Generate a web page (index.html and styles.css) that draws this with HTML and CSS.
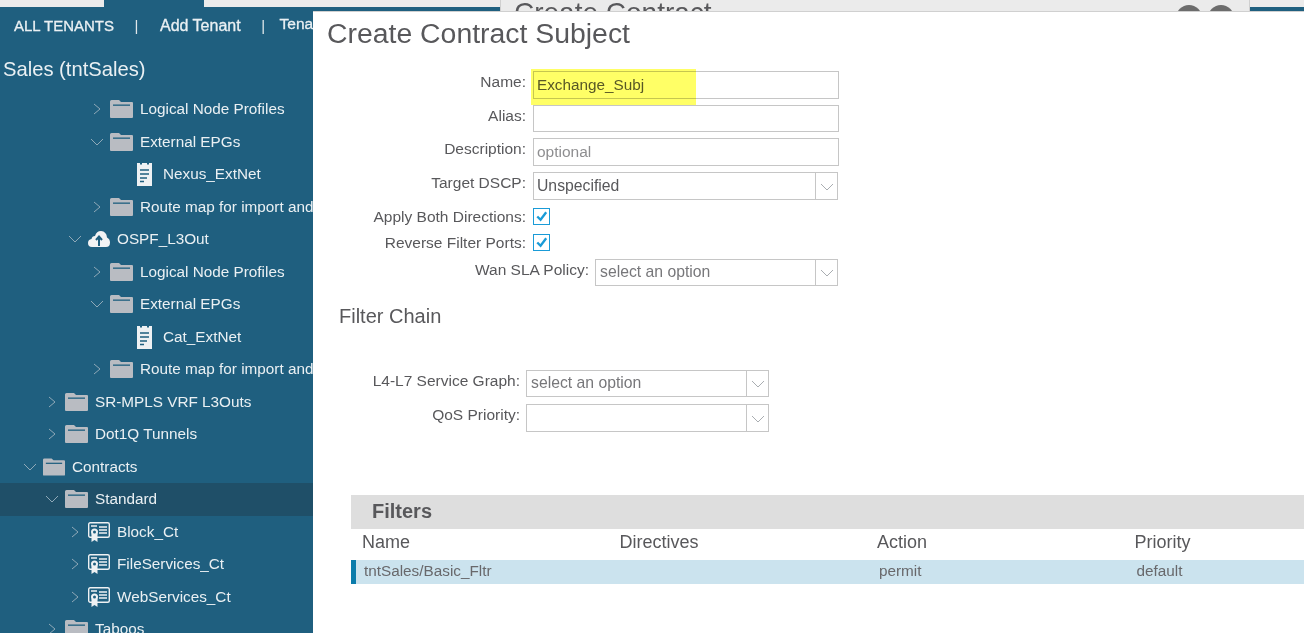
FILE: index.html
```html
<!DOCTYPE html>
<html lang="en">
<head>
    <meta charset="UTF-8">
    <meta name="viewport" content="width=device-width, initial-scale=1.0">
    <title>Create Contract Subject</title>
    <link rel="stylesheet" href="styles.css">
</head>
<body>

    <!-- icon sheet -->
    <svg class="icon-sheet" width="0" height="0">
        <symbol id="folder" viewBox="0 0 23 18">
            <path d="M0 1.500Q0 0 1.500 0H9L11 2H22Q23 2 23 3V17Q23 18 22 18H1Q0 18 0 17Z" fill="#b9bcc2"/>
            <rect x="3" y="4.500" width="17" height="1.300" fill="#1f5f7f"/>
        </symbol>
        <symbol id="note" viewBox="0 0 15 23">
            <path d="M0 0H3V1.500H5V0H10V1.500H12V0H15V23H0Z" fill="#eef1f3"/>
            <path d="M3 7H12M3 11H12M3 15H10M3 18.500H7" stroke="#1f5f7f" stroke-width="1.600" fill="none"/>
        </symbol>
        <symbol id="cloud" viewBox="0 0 22 16">
            <path d="M4 16Q0 16 0 12Q0 8.500 3.500 8Q4 5 7 5Q8.500 0 13 0Q18.500 0.500 19 6.500Q22 8 22 11.500Q22 16 18 16Z" fill="#f2f3f4"/>
            <path d="M11 15V6M8 9L11 5.500L14 9" stroke="#1f5f7f" stroke-width="2" fill="none"/>
        </symbol>
        <symbol id="cert" viewBox="0 0 22 20">
            <rect x="0.700" y="0.700" width="20.600" height="14.600" rx="1.500" fill="#1f5f7f" stroke="#eef1f3" stroke-width="1.400"/>
            <path d="M11 5H19M11 8H19M11 11H19M3 4H9" stroke="#eef1f3" stroke-width="1.300" fill="none"/>
            <path d="M3.500 12V20L6.500 18L9.500 20V12Z" fill="#eef1f3"/>
            <circle cx="6.500" cy="10" r="3.500" fill="#eef1f3"/>
            <circle cx="6.500" cy="10" r="1.500" fill="#1f5f7f"/>
        </symbol>
        <symbol id="right" viewBox="0 0 8 12">
            <path d="M1 1L7 6L1 11" stroke="#8fa9b8" stroke-width="1" fill="none"/>
        </symbol>
        <symbol id="down" viewBox="0 0 14 8">
            <path d="M1 1L7 7L13 1" stroke="#8fa9b8" stroke-width="1" fill="none"/>
        </symbol>
        <symbol id="caret" viewBox="0 0 14 8">
            <path d="M1 1L7 7L13 1" stroke="#a9adb1" stroke-width="1" fill="none"/>
        </symbol>
    </svg>

    <div class="top-strip">
        <div class="strip-gray strip-left"></div>
        <div class="strip-gray strip-right"></div>
    </div>

    <!-- dialog behind -->
    <div class="back-dialog">
        <span class="back-title">Create Contract</span>
        <span class="back-btn"></span>
        <span class="back-btn"></span>
    </div>

    <!-- left tree -->
    <div class="sidebar">
        <div class="tenant-nav">
            <a class="nav-item">ALL TENANTS</a>
            <span class="nav-sep">|</span>
            <a class="nav-item nav-wide">Add Tenant</a>
            <span class="nav-sep">|</span>
            <a class="nav-item nav-cut">Tenant Search</a>
        </div>
        <div class="tenant-name">Sales (tntSales)</div>
        <ul class="tree">
            <li class="node lvl3"><svg class="chev"><use href="#right"/></svg><svg class="ico folder"><use href="#folder"/></svg><span>Logical Node Profiles</span></li>
            <li class="node lvl3 open"><svg class="chev"><use href="#down"/></svg><svg class="ico folder"><use href="#folder"/></svg><span>External EPGs</span></li>
            <li class="node lvl4"><svg class="ico note"><use href="#note"/></svg><span>Nexus_ExtNet</span></li>
            <li class="node lvl3"><svg class="chev"><use href="#right"/></svg><svg class="ico folder"><use href="#folder"/></svg><span>Route map for import and export</span></li>
            <li class="node lvl2 open"><svg class="chev"><use href="#down"/></svg><svg class="ico cloud"><use href="#cloud"/></svg><span>OSPF_L3Out</span></li>
            <li class="node lvl3"><svg class="chev"><use href="#right"/></svg><svg class="ico folder"><use href="#folder"/></svg><span>Logical Node Profiles</span></li>
            <li class="node lvl3 open"><svg class="chev"><use href="#down"/></svg><svg class="ico folder"><use href="#folder"/></svg><span>External EPGs</span></li>
            <li class="node lvl4"><svg class="ico note"><use href="#note"/></svg><span>Cat_ExtNet</span></li>
            <li class="node lvl3"><svg class="chev"><use href="#right"/></svg><svg class="ico folder"><use href="#folder"/></svg><span>Route map for import and export</span></li>
            <li class="node lvl1"><svg class="chev"><use href="#right"/></svg><svg class="ico folder"><use href="#folder"/></svg><span>SR-MPLS VRF L3Outs</span></li>
            <li class="node lvl1"><svg class="chev"><use href="#right"/></svg><svg class="ico folder"><use href="#folder"/></svg><span>Dot1Q Tunnels</span></li>
            <li class="node lvl0 open"><svg class="chev"><use href="#down"/></svg><svg class="ico folder"><use href="#folder"/></svg><span>Contracts</span></li>
            <li class="node lvl1 open selected"><svg class="chev"><use href="#down"/></svg><svg class="ico folder"><use href="#folder"/></svg><span>Standard</span></li>
            <li class="node lvl2"><svg class="chev"><use href="#right"/></svg><svg class="ico cert"><use href="#cert"/></svg><span>Block_Ct</span></li>
            <li class="node lvl2"><svg class="chev"><use href="#right"/></svg><svg class="ico cert"><use href="#cert"/></svg><span>FileServices_Ct</span></li>
            <li class="node lvl2"><svg class="chev"><use href="#right"/></svg><svg class="ico cert"><use href="#cert"/></svg><span>WebServices_Ct</span></li>
            <li class="node lvl1"><svg class="chev"><use href="#right"/></svg><svg class="ico folder"><use href="#folder"/></svg><span>Taboos</span></li>
        </ul>
    </div>

    <!-- front dialog -->
    <div class="dialog">
        <h1 class="dialog-title">Create Contract Subject</h1>

        <div class="form">
            <div class="field">
                <label>Name:</label>
                <div class="input input-name">Exchange_Subj</div>
            </div>
            <div class="field">
                <label>Alias:</label>
                <div class="input"></div>
            </div>
            <div class="field">
                <label>Description:</label>
                <div class="input placeholder">optional</div>
            </div>
            <div class="field field-select">
                <label>Target DSCP:</label>
                <div class="select"><span class="select-text">Unspecified</span><span class="select-btn"><svg class="caret"><use href="#caret"/></svg></span></div>
            </div>
            <div class="field field-check">
                <label>Apply Both Directions:</label>
                <span class="check"><svg viewBox="0 0 16 16"><path d="M3.500 8L7 11.500L13 3.500" stroke="#1a9bd7" stroke-width="2.500" fill="none"/></svg></span>
            </div>
            <div class="field field-check">
                <label>Reverse Filter Ports:</label>
                <span class="check"><svg viewBox="0 0 16 16"><path d="M3.500 8L7 11.500L13 3.500" stroke="#1a9bd7" stroke-width="2.500" fill="none"/></svg></span>
            </div>
            <div class="field field-wan">
                <label>Wan SLA Policy:</label>
                <div class="select"><span class="select-text placeholder-dark">select an option</span><span class="select-btn"><svg class="caret"><use href="#caret"/></svg></span></div>
            </div>
        </div>

        <h2 class="section-title">Filter Chain</h2>

        <div class="form form-chain">
            <div class="field">
                <label>L4-L7 Service Graph:</label>
                <div class="select"><span class="select-text placeholder-dark">select an option</span><span class="select-btn"><svg class="caret"><use href="#caret"/></svg></span></div>
            </div>
            <div class="field">
                <label>QoS Priority:</label>
                <div class="select"><span class="select-text"></span><span class="select-btn"><svg class="caret"><use href="#caret"/></svg></span></div>
            </div>
        </div>

        <div class="filters">
            <div class="filters-head">Filters</div>
            <div class="filters-cols">
                <span>Name</span>
                <span>Directives</span>
                <span>Action</span>
                <span>Priority</span>
            </div>
            <div class="filters-row">
                <span>tntSales/Basic_Fltr</span>
                <span></span>
                <span>permit</span>
                <span>default</span>
            </div>
        </div>

        <!-- marker stroke over the name field -->
        <div class="marker"></div>
    </div>

</body>
</html>
```

FILE: styles.css
```css
/* page */
html, body {
    margin: 0;
    padding: 0;
}

body {
    position: relative;
    width: 1304px;
    height: 633px;
    overflow: hidden;
    background-color: #1f5f7f;
    font-family: "Liberation Sans", Arial, sans-serif;
    font-size: 15.300px;
}

.icon-sheet {
    display: none;
}

/* strip along the top */
.top-strip {
    display: flex;
    height: 7px;
}

.strip-gray {
    background-color: #ebebeb;
}

.strip-left {
    width: 104px;
}

.strip-right {
    flex: 1;
    margin-left: 100px;
}

/* dialog behind the front one */
.back-dialog {
    position: absolute;
    left: 500px;
    top: 0;
    width: 750px;
    height: 12px;
    overflow: hidden;
    background-color: #ebebeb;
    border-left: 1px solid #cfcfcf;
    border-right: 1px solid #cfcfcf;
    box-sizing: border-box;
    display: flex;
}

.back-title {
    margin: -3px 0 0 13px;
    font-size: 28px;
    line-height: 32px;
    color: #58585b;
    flex: 1;
}

.back-btn {
    width: 26px;
    height: 26px;
    margin: 5px 6px 0 0;
    border-radius: 50%;
    background-color: #6c6c6c;
}

.back-btn:last-child {
    margin-right: 15px;
}

/* left tree */
.sidebar {
    width: 313px;
    height: 626px;
    overflow: hidden;
    color: #eaf0f3;
}

.tenant-nav {
    display: flex;
    align-items: baseline;
    height: 27px;
    padding: 10px 0 1px 14px;
    font-size: 15px;
    line-height: 17px;
    white-space: nowrap;
    -webkit-text-stroke: 0.300px #eaf0f3;
}

.nav-sep {
    margin: 0 20.500px;
    color: #dfe7ea;
    -webkit-text-stroke: 0;
}

.nav-wide {
    margin-left: 1px;
    font-size: 16px;
}

.nav-cut {
    position: relative;
    top: -2px;
    margin-left: -6px;
    font-size: 15.500px;
}

.tenant-name {
    padding: 12px 0 0 3px;
    height: 36px;
    font-size: 20.200px;
    line-height: 24px;
}

.tree {
    list-style: none;
    margin: 0;
    padding: 0;
}

/* rows alternate so the pitch averages 32.5 */
.node {
    position: relative;
    display: flex;
    align-items: center;
    box-sizing: border-box;
    height: 33px;
    padding-bottom: 1px;
    white-space: nowrap;
}

.node:nth-child(even) {
    height: 32px;
    padding-bottom: 0;
}

.selected {
    background-color: #1f4f68;
}

.lvl0 { padding-left: 43px; }
.lvl1 { padding-left: 65px; }
.lvl2 { padding-left: 88px; }
.lvl3 { padding-left: 110px; }
.lvl4 { padding-left: 137px; }

.chev {
    position: absolute;
    width: 8px;
    height: 12px;
    margin-left: -17px;
}

.open .chev {
    width: 14px;
    height: 8px;
    margin-left: -20px;
}

.ico {
    flex: none;
}

.folder {
    width: 23px;
    height: 18px;
    margin-right: 7px;
}

.lvl0 .folder {
    width: 22px;
}

.note {
    width: 15px;
    height: 23px;
    margin-right: 11px;
}

.cloud {
    width: 22px;
    height: 16px;
    margin-right: 7px;
}

.cert {
    width: 22px;
    height: 20px;
    margin-right: 7px;
}

/* front dialog */
.dialog {
    position: absolute;
    left: 313px;
    top: 11px;
    right: 0;
    bottom: 0;
    background-color: #fff;
    border-top: 1px solid #d0d0d0;
    color: #58585b;
}

.dialog-title {
    margin: 0;
    padding: 5px 0 0 14px;
    height: 54px;
    box-sizing: content-box;
    font-size: 28.400px;
    line-height: 32px;
    font-weight: normal;
}

.form {
    display: flex;
    flex-direction: column;
    width: 526px;
    font-size: 15.500px;
}

.field {
    display: flex;
    justify-content: flex-end;
    gap: 7px;
    height: 27.500px;
    margin-bottom: 6px;
}

.field label {
    line-height: 22px;
    white-space: nowrap;
}

.input {
    width: 306px;
    height: 27.500px;
    box-sizing: border-box;
    border: 1px solid #c6c6c6;
    padding-left: 3px;
    line-height: 25px;
}

.input-name {
    font-size: 15.300px;
}

.placeholder {
    color: #8e8e90;
}

.select {
    display: flex;
    width: 305px;
    height: 27.500px;
    box-sizing: border-box;
    border: 1px solid #c6c6c6;
    font-size: 15.750px;
    line-height: 25px;
}

.field-select {
    margin-right: 1px;
}

.field-select .select {
    height: 28px;
}

.select-text {
    flex: 1;
    padding-left: 3px;
}

.placeholder-dark {
    color: #77777a;
    padding-left: 4px;
}

.select-btn {
    display: flex;
    align-items: center;
    justify-content: center;
    width: 21px;
    border-left: 1px solid #c6c6c6;
}

.caret {
    width: 14px;
    height: 8px;
    margin-top: 2px;
}

.field-check {
    height: 20px;
    position: relative;
    top: 1px;
}

.check {
    width: 17px;
    height: 17px;
    margin: 2px 289px 0 0;
    box-sizing: border-box;
    border: 1px solid #1a9bd7;
}

.check svg {
    display: block;
    width: 15px;
    height: 15px;
}

.field-wan {
    margin: 1.500px 1px 6px 0;
    gap: 6px;
}

.field-wan .select {
    width: 243px;
    line-height: 23px;
}

.section-title {
    margin: 0;
    padding: 11.500px 0 0 26px;
    height: 66px;
    font-size: 20px;
    line-height: 24px;
    font-weight: normal;
}

.form-chain {
    width: 456px;
}

.form-chain .select {
    width: 243px;
    line-height: 23px;
}

.form-chain .field {
    gap: 6px;
    margin-bottom: 7px;
}

.form-chain label {
    line-height: 22px;
}

.filters {
    margin: 56px 0 0 38px;
}

.filters-head {
    height: 34px;
    padding-left: 21px;
    background-color: #dedede;
    font-size: 20px;
    font-weight: bold;
    line-height: 32px;
}

.filters-cols, .filters-row {
    display: grid;
    grid-template-columns: 257.500px 257.500px 257.500px 1fr;
}

.filters-cols {
    height: 31px;
    padding-left: 11px;
    font-size: 18px;
    line-height: 27px;
}

.filters-row {
    height: 24px;
    padding-left: 8px;
    background-color: #cbe3ee;
    border-left: 5px solid #0a7cab;
    line-height: 22px;
    color: #68686b;
}

.marker {
    position: absolute;
    left: 218px;
    top: 57px;
    width: 165px;
    height: 36px;
    background-color: #ffff66;
    mix-blend-mode: multiply;
}
```
